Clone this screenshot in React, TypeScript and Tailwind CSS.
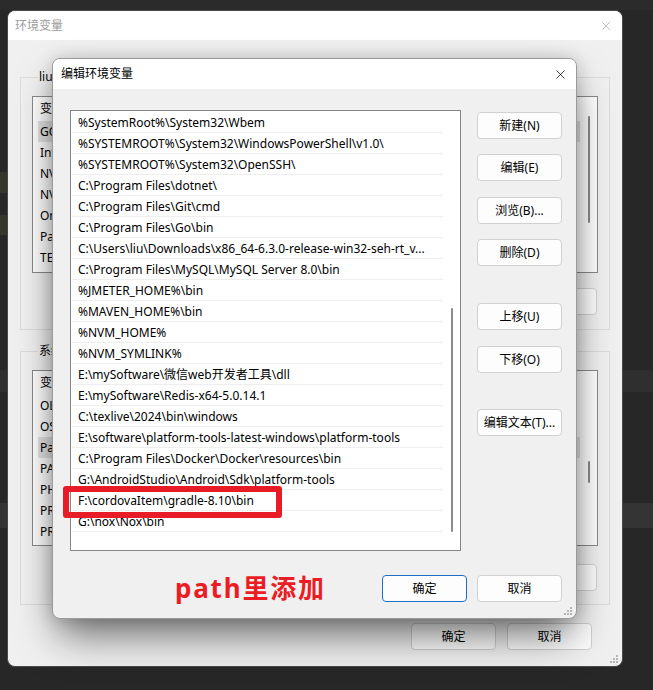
import { X } from "lucide-react";

const paths = [
  "%SystemRoot%\\System32\\Wbem",
  "%SYSTEMROOT%\\System32\\WindowsPowerShell\\v1.0\\",
  "%SYSTEMROOT%\\System32\\OpenSSH\\",
  "C:\\Program Files\\dotnet\\",
  "C:\\Program Files\\Git\\cmd",
  "C:\\Program Files\\Go\\bin",
  "C:\\Users\\liu\\Downloads\\x86_64-6.3.0-release-win32-seh-rt_v...",
  "C:\\Program Files\\MySQL\\MySQL Server 8.0\\bin",
  "%JMETER_HOME%\\bin",
  "%MAVEN_HOME%\\bin",
  "%NVM_HOME%",
  "%NVM_SYMLINK%",
  "E:\\mySoftware\\微信web开发者工具\\dll",
  "E:\\mySoftware\\Redis-x64-5.0.14.1",
  "C:\\texlive\\2024\\bin\\windows",
  "E:\\software\\platform-tools-latest-windows\\platform-tools",
  "C:\\Program Files\\Docker\\Docker\\resources\\bin",
  "G:\\AndroidStudio\\Android\\Sdk\\platform-tools",
  "F:\\cordovaItem\\gradle-8.10\\bin",
  "G:\\nox\\Nox\\bin",
];

const userVars = ["GOPATH", "IntelliJ IDEA", "NVM_HOME", "NVM_SYMLINK", "OneDrive", "Path", "TEMP"];
const sysVars = ["OLLAMA_MODELS", "OS", "Path", "PATHEXT", "PHP_HOME", "PROCESSOR_ARCHITECTURE", "PROCESSOR_LEVEL"];

const Btn = ({ children, primary = false, className = "" }: { children: React.ReactNode; primary?: boolean; className?: string }) => (
  <div
    className={`flex h-[27px] w-[85px] shrink-0 items-center justify-center rounded-[4px] border bg-[#fdfdfd] text-[12px] text-black ${
      primary ? "border-[#1d6fc6]" : "border-[#d1d1d1]"
    } ${className}`}
  >
    {children}
  </div>
);

const Grip = () => (
  <svg width="9" height="9" viewBox="0 0 9 9" className="absolute bottom-[2px] right-[3px]">
    {[
      [7, 1],
      [4, 4],
      [7, 4],
      [1, 7],
      [4, 7],
      [7, 7],
    ].map(([x, y]) => (
      <rect key={`${x}-${y}`} x={x - 1} y={y - 1} width="2" height="2" fill="#b4b4b4" />
    ))}
  </svg>
);

const VarList = ({ rows, selected, thumbTop, thumbH, h }: { rows: string[]; selected: number; thumbTop: number; thumbH: number; h: string }) => (
  <div className={`flex ${h} border border-[#8a8a8a] bg-white`}>
    <div className="flex flex-1 flex-col">
      <div className="h-[24px] pl-[7px] leading-[23px]">变量</div>
      {rows.map((r, i) => (
        <div
          key={r}
          className={`ml-[5px] h-[21px] whitespace-nowrap pl-[2px] leading-[21px] ${i === selected ? "bg-[#e3e3e3]" : ""}`}
        >
          {r}
        </div>
      ))}
    </div>
    <div className="flex w-[17px] justify-center">
      <div className="w-[2px] rounded-full bg-[#8a8a8a]" style={{ marginTop: thumbTop, height: thumbH }} />
    </div>
  </div>
);

export default function App() {
  return (
    <div className="relative h-[690px] w-[653px] overflow-hidden bg-[#272727] font-['Noto_Sans','Noto_Sans_CJK_SC',sans-serif] text-[12px] text-black">
      {/* editor behind */}
      <div className="flex flex-col">
        <div className="h-[10px] bg-[#2b2b2b]" />
        <div className="h-[162px]" />
        <div className="h-[21px] w-[7px] bg-[#36372c]" />
        <div className="h-[22px]" />
        <div className="h-[20px] w-[7px] bg-[#36372c]" />
        <div className="h-[135px]" />
        <div className="h-[22px] bg-[#2f2f2f]" />
        <div className="h-[111px]" />
        <div className="h-[25px] bg-[#343434]" />
      </div>

      {/* 环境变量 window */}
      <div className="absolute left-[7px] top-[10px] flex h-[657px] w-[616px] flex-col overflow-hidden rounded-[8px] border border-[#4a4a4a] bg-[#f0f0f0]">
        <div className="flex h-[29px] items-center justify-between bg-white pl-[7px] pr-[9px]">
          <span className="text-[#9c9c9c]">环境变量</span>
          <X size={14} strokeWidth={1} className="text-[#8a8a8a]" />
        </div>
        <div className="flex flex-col px-[12px] pt-[28px]">
          <fieldset className="flex h-[262px] flex-col border border-[#dcdcdc] px-[11px] pb-[16px]">
            <legend className="ml-[6px] px-[1px]">liu 的用户变量(U)</legend>
            <div className="mt-[10px]">
              <VarList rows={userVars} selected={0} thumbTop={19} thumbH={107} h="h-[177px]" />
            </div>
            <div className="mt-[15px] flex justify-end gap-[10px]">
              <Btn>新建(N)...</Btn>
              <Btn>编辑(E)...</Btn>
              <Btn className="mr-px">删除(D)</Btn>
            </div>
          </fieldset>
          <fieldset className="mt-[12px] flex h-[263px] flex-col border border-[#dcdcdc] px-[11px] pb-[16px]">
            <legend className="ml-[6px] px-[1px]">系统变量(S)</legend>
            <div className="mt-[10px]">
              <VarList rows={sysVars} selected={2} thumbTop={90} thumbH={22} h="h-[176px]" />
            </div>
            <div className="mt-[18px] flex justify-end gap-[10px]">
              <Btn>新建(W)...</Btn>
              <Btn>编辑(I)...</Btn>
              <Btn className="mr-px">删除(L)</Btn>
            </div>
          </fieldset>
          <div className="mt-[18px] flex justify-end gap-[11px] pr-[18px]">
            <Btn>确定</Btn>
            <Btn>取消</Btn>
          </div>
        </div>
        <Grip />
      </div>

      {/* 编辑环境变量 dialog */}
      <div className="absolute left-[52px] top-[58px] flex h-[561px] w-[525px] flex-col overflow-hidden rounded-[8px] border border-[#9a9a9a] bg-[#f0f0f0] shadow-[0_22px_40px_-6px_rgba(0,0,0,0.55),0_0_18px_rgba(0,0,0,0.18)]">
        <div className="flex h-[30px] items-center justify-between bg-white pl-[8px] pr-[8px]">
          <span>编辑环境变量</span>
          <X size={15} strokeWidth={1.2} className="text-black" />
        </div>
        <div className="flex flex-col pl-[17px] pr-[14px] pt-[21px]">
          <div className="flex">
            <div className="flex h-[441px] w-[391px] border border-[#868686] bg-white">
              <div className="ml-px flex w-[371px] flex-col pt-px">
                {paths.map((p) => (
                  <div
                    key={p}
                    className="h-[21px] overflow-hidden whitespace-nowrap border-b border-[#eeeeee] pl-[6px] leading-[22px]"
                  >
                    {p}
                  </div>
                ))}
              </div>
              <div className="flex w-[17px] justify-center">
                <div className="mt-[197px] h-[224px] w-[2px] rounded-full bg-[#8a8a8a]" />
              </div>
            </div>
            <div className="ml-[16px] flex flex-col pt-[2px]">
              <Btn>新建(N)</Btn>
              <Btn className="mt-[15px]">编辑(E)</Btn>
              <Btn className="mt-[16px]">浏览(B)...</Btn>
              <Btn className="mt-[15px]">删除(D)</Btn>
              <Btn className="mt-[37px]">上移(U)</Btn>
              <Btn className="mt-[16px]">下移(O)</Btn>
              <Btn className="mt-[36px]">编辑文本(T)...</Btn>
            </div>
          </div>
          <div className="mt-[24px] flex items-center">
            <span className="ml-[105px] text-[26px] font-bold leading-[27px] tracking-[1.8px] text-[#ec1c24]">path里添加</span>
            <Btn primary className="ml-auto">确定</Btn>
            <Btn className="ml-[10px]">取消</Btn>
          </div>
        </div>
        <Grip />
      </div>

      {/* annotation */}
      <div className="absolute left-[63px] top-[486px] h-[32px] w-[219px] rounded-[3px] border-[6px] border-[#e81c26]" />
    </div>
  );
}
